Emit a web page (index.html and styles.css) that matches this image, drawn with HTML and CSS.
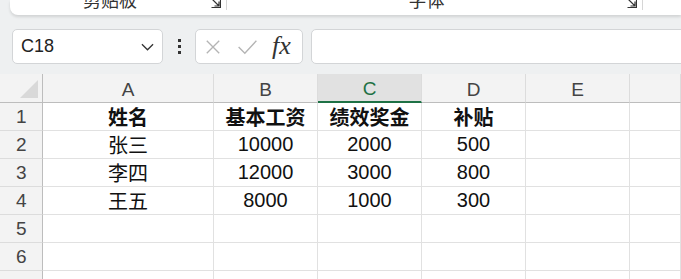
FILE: index.html
```html
<!DOCTYPE html>
<html lang="zh">
<head>
    <meta charset="UTF-8">
    <title>工作表</title>
    <link rel="stylesheet" href="styles.css">
</head>
<body>

    <div class="ribbon">
        <div class="ribbon--group ribbon--clip">
            <span class="ribbon--label">剪贴板</span>
            <svg class="ribbon--launcher" viewBox="0 0 10 10"><path d="M1 1 L8 8 M3.5 8 H8 V3.5 M0.5 9.5 H9.5 V0.5" fill="none" stroke="#333" stroke-width="1.2"/></svg>
        </div>
        <div class="ribbon--group ribbon--font">
            <span class="ribbon--label">字体</span>
            <svg class="ribbon--launcher" viewBox="0 0 10 10"><path d="M1 1 L8 8 M3.5 8 H8 V3.5 M0.5 9.5 H9.5 V0.5" fill="none" stroke="#333" stroke-width="1.2"/></svg>
        </div>
        <div class="ribbon--group ribbon--rest"></div>
    </div>

    <div class="formula">
        <div class="formula--name">
            <span>C18</span>
            <svg class="formula--chevron" viewBox="0 0 14 8"><path d="M1 1 L7 7 L13 1" fill="none" stroke="#333" stroke-width="1.4"/></svg>
        </div>
        <div class="formula--more">
            <span class="dot"></span><span class="dot"></span><span class="dot"></span>
        </div>
        <div class="formula--buttons">
            <svg class="formula--icon" viewBox="0 0 18 18"><path d="M2 2 L16 16 M16 2 L2 16" stroke="#b4b4b4" stroke-width="1.5" fill="none"/></svg>
            <svg class="formula--icon formula--check" viewBox="0 0 22 18"><path d="M1 9 L8 16 L21 2" stroke="#b4b4b4" stroke-width="1.5" fill="none"/></svg>
            <span class="formula--fx">fx</span>
        </div>
        <div class="formula--input"></div>
    </div>

    <div class="sheet">
        <div class="hd corner"><span class="corner--tri"></span></div>
        <div class="hd col">A</div>
        <div class="hd col">B</div>
        <div class="hd col is-active">C</div>
        <div class="hd col">D</div>
        <div class="hd col">E</div>
        <div class="hd col"></div>

        <div class="hd row">1</div>
        <div class="cell bold">姓名</div>
        <div class="cell bold">基本工资</div>
        <div class="cell bold">绩效奖金</div>
        <div class="cell bold">补贴</div>
        <div class="cell"></div>
        <div class="cell"></div>

        <div class="hd row">2</div>
        <div class="cell">张三</div>
        <div class="cell">10000</div>
        <div class="cell">2000</div>
        <div class="cell">500</div>
        <div class="cell"></div>
        <div class="cell"></div>

        <div class="hd row">3</div>
        <div class="cell">李四</div>
        <div class="cell">12000</div>
        <div class="cell">3000</div>
        <div class="cell">800</div>
        <div class="cell"></div>
        <div class="cell"></div>

        <div class="hd row">4</div>
        <div class="cell">王五</div>
        <div class="cell">8000</div>
        <div class="cell">1000</div>
        <div class="cell">300</div>
        <div class="cell"></div>
        <div class="cell"></div>

        <div class="hd row">5</div>
        <div class="cell"></div>
        <div class="cell"></div>
        <div class="cell"></div>
        <div class="cell"></div>
        <div class="cell"></div>
        <div class="cell"></div>

        <div class="hd row">6</div>
        <div class="cell"></div>
        <div class="cell"></div>
        <div class="cell"></div>
        <div class="cell"></div>
        <div class="cell"></div>
        <div class="cell"></div>

        <div class="hd row"></div>
        <div class="cell"></div>
        <div class="cell"></div>
        <div class="cell"></div>
        <div class="cell"></div>
        <div class="cell"></div>
        <div class="cell"></div>
    </div>

</body>
</html>
```

FILE: styles.css
```css
html, body {
    height: 100%;
    overflow: hidden;
}
body {
    margin: 0;
    background-color: #eef0f1;
    font-family: 'Liberation Sans', 'Noto Sans CJK SC', sans-serif;
    color: #222222;
}

.ribbon {
    display: flex;
    height: 15px;
    margin-left: 10px;
    background-color: #ffffff;
    border-bottom-left-radius: 8px;
    box-shadow: 0 2px 3px rgba(0, 0, 0, .12);
    overflow: hidden;
}
.ribbon--group {
    position: relative;
    display: flex;
    justify-content: center;
    box-sizing: border-box;
    padding-right: 16px;
    border-right: 1px solid #d6d6d6;
    height: 10px;
}
.ribbon--clip {
    width: 217px;
}
.ribbon--font {
    width: 416px;
}
.ribbon--rest {
    flex: 1;
    border-right: 0;
}
.ribbon--label {
    font-family: 'Noto Sans CJK SC', sans-serif;
    font-size: 18px;
    line-height: 18px;
    margin-top: -10px;
    color: #333333;
}
.ribbon--launcher {
    position: absolute;
    right: 5px;
    top: -2px;
    width: 10px;
    height: 10px;
}

.formula {
    display: flex;
    height: 35px;
    margin-top: 14px;
    padding-left: 12px;
}
.formula--name,
.formula--buttons,
.formula--input {
    box-sizing: border-box;
    background-color: #ffffff;
    border: 1px solid #d3d5d7;
    border-radius: 5px;
}
.formula--name {
    width: 151px;
    display: flex;
    align-items: center;
    justify-content: space-between;
    padding: 0 8px 0 8px;
    font-size: 18px;
}
.formula--chevron {
    width: 13px;
    height: 8px;
}
.formula--more {
    width: 32px;
    display: flex;
    flex-direction: column;
    align-items: center;
    justify-content: center;
    gap: 3px;
}
.dot {
    width: 3px;
    height: 3px;
    background-color: #333333;
}
.formula--buttons {
    width: 108px;
    display: flex;
    align-items: center;
    padding-left: 9px;
    gap: 16px;
}
.formula--icon {
    width: 16px;
    height: 16px;
}
.formula--check {
    width: 21px;
}
.formula--fx {
    font-family: 'Liberation Serif', serif;
    font-style: italic;
    font-size: 26px;
    line-height: 26px;
    color: #333333;
    margin-left: -2px;
    margin-top: -2px;
}
.formula--input {
    flex: 1;
    margin-left: 8px;
    margin-right: -10px;
}

.sheet {
    display: grid;
    grid-template-columns: 43px 171px 104px 104px 104px 104px 1fr;
    grid-template-rows: 29px repeat(6, 28px) 10px;
    margin-top: 10px;
}
.hd {
    box-sizing: border-box;
    background-color: #f3f3f3;
    color: #444444;
    font-size: 19px;
    display: flex;
    align-items: center;
    justify-content: center;
}
.col {
    border-bottom: 1px solid #bdbdbd;
    border-right: 1px solid #dcdcdc;
    padding-top: 3px;
}
.col.is-active {
    background-color: #e1e1e1;
    color: #1e7145;
    border-bottom: 2px solid #1e7145;
}
.corner {
    border-bottom: 1px solid #bdbdbd;
    border-right: 1px solid #bdbdbd;
    justify-content: flex-start;
    align-items: flex-start;
}
.corner--tri {
    width: 0;
    height: 0;
    margin: 6px 0 0 20px;
    border-left: 18px solid transparent;
    border-bottom: 18px solid #d9d9d9;
}
.row {
    border-right: 1px solid #bdbdbd;
    border-bottom: 1px solid #dcdcdc;
    justify-content: flex-start;
    padding-left: 16px;
}
.cell {
    box-sizing: border-box;
    background-color: #ffffff;
    border-right: 1px solid #e1e1e1;
    border-bottom: 1px solid #e1e1e1;
    display: flex;
    align-items: center;
    justify-content: center;
    font-size: 20px;
    color: #111111;
    white-space: nowrap;
}
.cell.bold {
    font-weight: 700;
}
```
